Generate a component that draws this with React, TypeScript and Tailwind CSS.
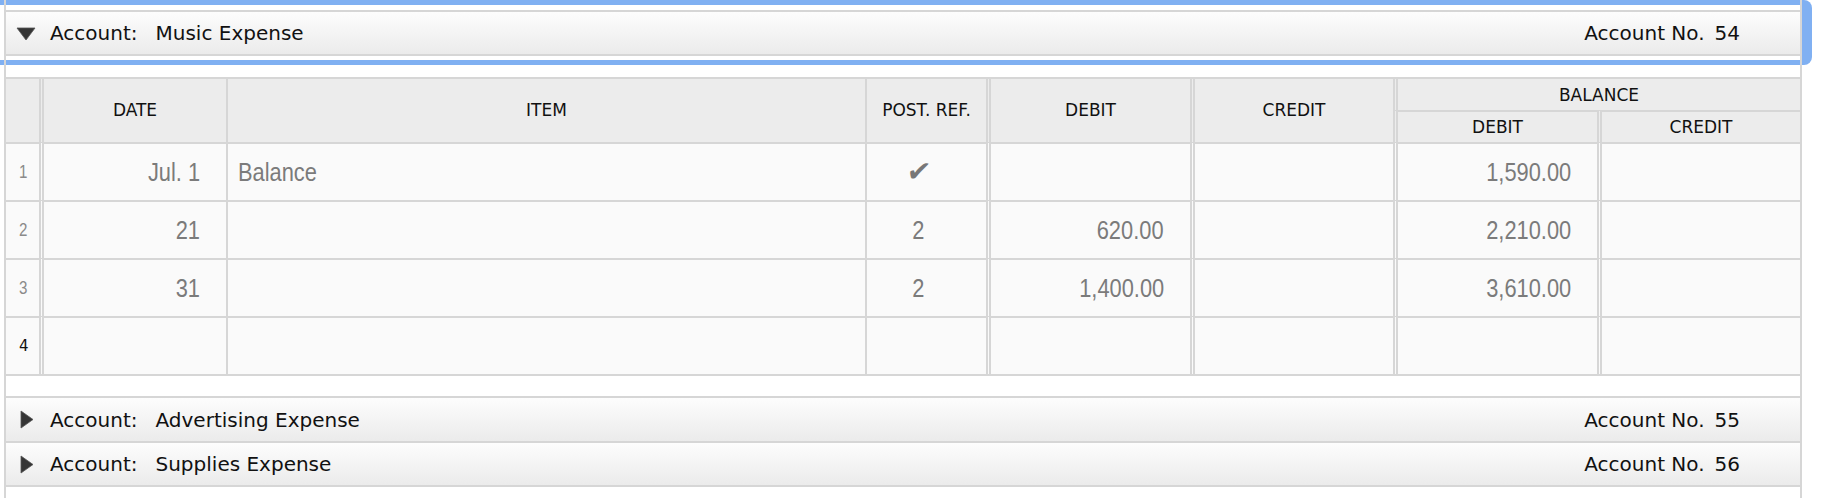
import React from "react";

const sans = "font-['DejaVu_Sans','Liberation_Sans',sans-serif]";
const arial = "font-['Liberation_Sans',sans-serif]";

const line = "border-[#d6d6d6]";
const single = "border-l-2 " + line;
const dbl = "border-l-[5px] [border-left-style:double] " + line;

type Row = {
  n: string;
  date: string;
  item: string;
  ref: string;
  debit: string;
  credit: string;
  balDebit: string;
  balCredit: string;
};

const rows: Row[] = [
  { n: "1", date: "Jul. 1", item: "Balance", ref: "✔", debit: "", credit: "", balDebit: "1,590.00", balCredit: "" },
  { n: "2", date: "21", item: "", ref: "2", debit: "620.00", credit: "", balDebit: "2,210.00", balCredit: "" },
  { n: "3", date: "31", item: "", ref: "2", debit: "1,400.00", credit: "", balDebit: "3,610.00", balCredit: "" },
  { n: "4", date: "", item: "", ref: "", debit: "", credit: "", balDebit: "", balCredit: "" },
];

// narrow grey figures, like the inputs of the ledger
const Narrow = ({ text, origin }: { text: string; origin: string }) =>
  text ? (
    <span className={"inline-block scale-x-[0.84] text-[26px] leading-none text-[#7b7b7b] " + arial + " " + origin}>
      {text}
    </span>
  ) : null;

const Arrow = ({ open }: { open: boolean }) => (
  <div className={"w-[44px] flex items-center " + (open ? "pl-[10px]" : "pl-[14px]")}>
    {open ? (
      <svg width="20" height="14" viewBox="0 0 20 14" className="mt-[2px]">
        <polygon points="1,1 19,1 10,13" fill="#353535" stroke="#555" strokeWidth="0.8" strokeLinejoin="round" />
      </svg>
    ) : (
      <svg width="14" height="19" viewBox="0 0 14 19">
        <polygon points="1,1 13,9.5 1,18" fill="#353535" stroke="#555" strokeWidth="0.8" strokeLinejoin="round" />
      </svg>
    )}
  </div>
);

const AccountHeader = ({
  name,
  no,
  open,
  className,
}: {
  name: string;
  no: string;
  open: boolean;
  className: string;
}) => (
  <div
    className={
      "flex items-center bg-gradient-to-b from-[#fdfdfd] to-[#ebebeb] text-[20px] text-[#111] pr-[60px] " +
      sans +
      " " +
      className
    }
  >
    <Arrow open={open} />
    <span>Account:</span>
    <span className="ml-[18px]">{name}</span>
    <span className="ml-auto">Account No.</span>
    <span className="ml-[10px]">{no}</span>
  </div>
);

const Ledger = () => {
  const head = "bg-[#ececec] flex items-center justify-center text-[17px] text-[#111] " + sans;
  const cell = "bg-[#fafafa] border-t-2 flex items-center " + line;
  return (
    <div className={"border-y-2 " + line}>
      <div className="grid grid-cols-[33px_187px_639px_121px_204px_203px_204px_203px] grid-rows-[31px_32px_58px_58px_58px_58px]">
        <div className={head + " row-span-2"} />
        <div className={head + " row-span-2 " + dbl}>DATE</div>
        <div className={head + " row-span-2 " + single}>ITEM</div>
        <div className={head + " row-span-2 " + single}>POST. REF.</div>
        <div className={head + " row-span-2 " + dbl}>DEBIT</div>
        <div className={head + " row-span-2 " + dbl}>CREDIT</div>
        <div className={head + " col-span-2 pt-[2px] " + dbl}>BALANCE</div>
        <div className={head + " border-t-2 pt-[2px] " + dbl}>DEBIT</div>
        <div className={head + " border-t-2 pt-[2px] " + dbl}>CREDIT</div>

        {rows.map((r) => (
          <React.Fragment key={r.n}>
            <div className={cell + " pl-[13px]"}>
              {r.n === "4" ? (
                <span className={"text-[15px] text-[#111] " + sans}>{r.n}</span>
              ) : (
                <span className={"inline-block origin-left scale-x-[0.84] text-[18px] text-[#8a8a8a] " + arial}>{r.n}</span>
              )}
            </div>
            <div className={cell + " justify-end pr-[26px] " + dbl}>
              <Narrow text={r.date} origin="origin-right" />
            </div>
            <div className={cell + " pl-[10px] " + single}>
              <Narrow text={r.item} origin="origin-left" />
            </div>
            <div className={cell + " justify-center pr-[16px] " + single}>
              {r.ref === "✔" ? (
                <span className={"inline-block skew-x-[-8deg] text-[28px] leading-none text-[#777] " + sans}>✔</span>
              ) : (
                <Narrow text={r.ref} origin="origin-center" />
              )}
            </div>
            <div className={cell + " justify-end pr-[26px] " + dbl}>
              <Narrow text={r.debit} origin="origin-right" />
            </div>
            <div className={cell + " justify-end pr-[26px] " + dbl}>
              <Narrow text={r.credit} origin="origin-right" />
            </div>
            <div className={cell + " justify-end pr-[26px] " + dbl}>
              <Narrow text={r.balDebit} origin="origin-right" />
            </div>
            <div className={cell + " justify-end pr-[26px] " + dbl}>
              <Narrow text={r.balCredit} origin="origin-right" />
            </div>
          </React.Fragment>
        ))}
      </div>
    </div>
  );
};

export default function App() {
  return (
    <div className="relative w-[1836px] h-[498px] bg-white overflow-hidden">
      {/* focus ring around the open account */}
      <div className="absolute top-0 left-[-20px] w-[1832px] h-[65px] border-y-[5px] border-r-[10px] border-[#80b0f2] rounded-r-[8px]" />
      <div className={"relative ml-[4px] w-[1798px] h-[498px] border-x-2 pt-[10px] " + line}>
        <AccountHeader name="Music Expense" no="54" open className={"h-[46px] border-y-2 " + line} />
        <div className="pt-[21px] pb-[20px]">
          <Ledger />
        </div>
        <AccountHeader name="Advertising Expense" no="55" open={false} className={"h-[45px] border-t-2 " + line} />
        <AccountHeader name="Supplies Expense" no="56" open={false} className={"h-[46px] border-y-2 " + line} />
      </div>
    </div>
  );
}
